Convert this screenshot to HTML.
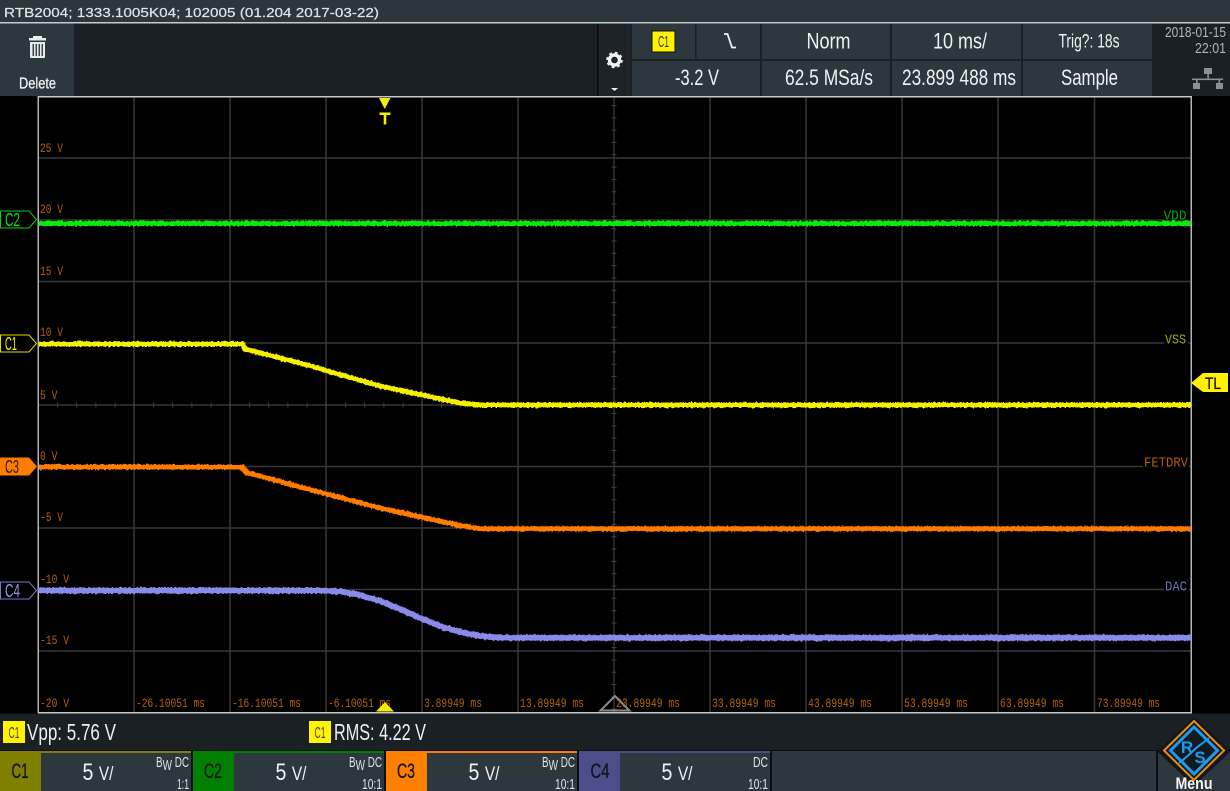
<!DOCTYPE html>
<html><head><meta charset="utf-8"><style>
html,body{margin:0;padding:0;background:#000;width:1230px;height:791px;overflow:hidden}
svg{display:block}
text{font-family:"Liberation Sans",sans-serif}
.m{font-family:"Liberation Mono",monospace;font-size:12.5px;fill:#b85f08}
.c{fill:#f0f2f2;font-size:22px;text-anchor:middle}
.s{fill:#dfe3e5;font-size:14.500px;text-anchor:end}
</style></head><body>
<svg width="1230" height="791" viewBox="0 0 1230 791" xmlns="http://www.w3.org/2000/svg">
<defs>
<filter id="n" x="-2%" y="-20%" width="104%" height="140%" filterUnits="objectBoundingBox">
<feTurbulence type="fractalNoise" baseFrequency="0.45 0.3" numOctaves="2" seed="4"/>
<feDisplacementMap in="SourceGraphic" scale="3.500" xChannelSelector="A" yChannelSelector="R"/>
</filter>
</defs>
<rect width="1230" height="791" fill="#000"/>
<!-- header -->
<rect width="1230" height="22" fill="#2d363c"/>
<rect y="22" width="1230" height="1.500" fill="#c8cccc"/>
<text x="4" y="17" font-size="13" fill="#e2e5e6" textLength="375" lengthAdjust="spacingAndGlyphs" stroke="#e2e5e6" stroke-width=".2">RTB2004; 1333.1005K04; 102005 (01.204 2017-03-22)</text>
<!-- toolbar -->
<rect y="23.500" width="1230" height="72.500" fill="#1a2024"/>
<rect y="23.500" width="74" height="72.500" fill="#2d373e"/>
<rect x="598" y="23.500" width="33" height="72.500" fill="#1d2327"/>
<rect x="597" y="23.500" width="1.500" height="72.500" fill="#0b0e10"/>
<g fill="#2d373e">
<rect x="632" y="24" width="63" height="35"/><rect x="696.500" y="24" width="63.500" height="35"/>
<rect x="762" y="24" width="128" height="35"/><rect x="892" y="24" width="129" height="35"/><rect x="1023" y="24" width="129" height="35"/>
<rect x="632" y="61" width="128" height="35"/><rect x="762" y="61" width="128" height="35"/><rect x="892" y="61" width="129" height="35"/><rect x="1023" y="61" width="129" height="35"/>
</g>
<!-- trash -->
<g fill="#e8ecec">
<rect x="33" y="36" width="9" height="2"/><rect x="29" y="38" width="17" height="2.500"/>
<path d="M30 42h15v15a1 1 0 0 1-1 1H31a1 1 0 0 1-1-1z"/>
</g>
<g fill="#3b444a"><rect x="32.500" y="44" width="1.500" height="12"/><rect x="35.500" y="44" width="1.500" height="12"/><rect x="38.500" y="44" width="1.500" height="12"/><rect x="41.500" y="44" width="1.500" height="12"/></g>
<text x="37.500" y="88.500" font-size="16" fill="#eef0f0" text-anchor="middle" textLength="37" lengthAdjust="spacingAndGlyphs" stroke="#eef0f0" stroke-width=".3">Delete</text>
<!-- gear -->
<circle cx="614.500" cy="60" r="5" fill="none" stroke="#f0f2f2" stroke-width="3.400"/>
<circle cx="614.500" cy="60" r="7" fill="none" stroke="#f0f2f2" stroke-width="2.600" stroke-dasharray="2.700 2.800"/>
<path d="M611 88h7l-3.500 3z" fill="#f0f2f2"/>
<!-- cells -->
<rect x="652" y="31" width="23" height="21" fill="#fff200" stroke="#111" stroke-width="1"/>
<text x="663.500" y="47" font-size="16" fill="#333" text-anchor="middle" textLength="11" lengthAdjust="spacingAndGlyphs">C1</text>
<path d="M724 34h3.500l4.500 13.500h4" fill="none" stroke="#f0f2f2" stroke-width="1.800"/>
<text class="c" x="828.500" y="48.500" textLength="44" lengthAdjust="spacingAndGlyphs">Norm</text>
<text class="c" x="960" y="48.500" textLength="54" lengthAdjust="spacingAndGlyphs">10 ms/</text>
<text class="c" x="1089" y="47.500" style="font-size:19px" textLength="61" lengthAdjust="spacingAndGlyphs">Trig?: 18s</text>
<text class="c" x="697" y="85" textLength="44" lengthAdjust="spacingAndGlyphs">-3.2 V</text>
<text class="c" x="829" y="85" textLength="88" lengthAdjust="spacingAndGlyphs">62.5 MSa/s</text>
<text class="c" x="959" y="85" textLength="114" lengthAdjust="spacingAndGlyphs">23.899 488 ms</text>
<text class="c" x="1089.500" y="85" textLength="57" lengthAdjust="spacingAndGlyphs">Sample</text>
<text x="1226" y="37" font-size="15" fill="#aeb4b8" text-anchor="end" textLength="61" lengthAdjust="spacingAndGlyphs">2018-01-15</text>
<text x="1226" y="53" font-size="15" fill="#aeb4b8" text-anchor="end" textLength="31" lengthAdjust="spacingAndGlyphs">22:01</text>
<g fill="#8b9094"><rect x="1204" y="68" width="8" height="6"/><rect x="1207.300" y="74" width="1.600" height="5"/><rect x="1192" y="78.500" width="31" height="1.600"/><rect x="1196" y="80" width="1.600" height="3"/><rect x="1218.500" y="80" width="1.600" height="3"/><rect x="1193" y="83" width="7" height="6"/><rect x="1216" y="83" width="7" height="6"/></g>
<!-- grid -->
<g stroke="#383838" stroke-width="1.500" fill="none">
<path d="M134 97V713M230 97V713M326 97V713M422 97V713M518 97V713M710 97V713M806 97V713M902 97V713M998 97V713M1094.500 97V713"/>
<path d="M38 158H1191M38 220H1191M38 281.500H1191M38 343H1191M38 466.500H1191M38 528H1191M38 589.500H1191M38 651H1191"/>
</g>
<g fill="none" stroke="#404040">
<path d="M38 405H1191M614 97V713" stroke-width="1.200"/>
<path d="M38 405H1191" stroke-width="5" stroke-dasharray="1 18.200" stroke-dashoffset="-19"/>
<path d="M614 97V713" stroke-width="5" stroke-dasharray="1 11.320" stroke-dashoffset="-8"/>
</g>
<rect x="37.500" y="96" width="1.500" height="617" fill="#b4b4b4"/>
<rect x="1190.500" y="96" width="1.500" height="617" fill="#b4b4b4"/>
<rect x="38" y="96" width="1154" height="1.500" fill="#c8c8c8"/>
<rect x="38" y="712" width="1154" height="1.500" fill="#c8c8c8"/>
<!-- scale labels -->
<text class="m" x="40" y="152" textLength="23" lengthAdjust="spacingAndGlyphs">25 V</text>
<text class="m" x="40" y="213" textLength="23" lengthAdjust="spacingAndGlyphs">20 V</text>
<text class="m" x="40" y="275" textLength="23" lengthAdjust="spacingAndGlyphs">15 V</text>
<text class="m" x="40" y="336" textLength="23" lengthAdjust="spacingAndGlyphs">10 V</text>
<text class="m" x="40" y="399" textLength="17.500" lengthAdjust="spacingAndGlyphs">5 V</text>
<text class="m" x="40" y="460" textLength="17.500" lengthAdjust="spacingAndGlyphs">0 V</text>
<text class="m" x="40" y="521" textLength="23" lengthAdjust="spacingAndGlyphs">-5 V</text>
<text class="m" x="40" y="583" textLength="29" lengthAdjust="spacingAndGlyphs">-10 V</text>
<text class="m" x="40" y="644" textLength="29" lengthAdjust="spacingAndGlyphs">-15 V</text>
<text class="m" x="40" y="707" textLength="29" lengthAdjust="spacingAndGlyphs">-20 V</text>
<text class="m" x="136" y="707" textLength="69" lengthAdjust="spacingAndGlyphs">-26.10051 ms</text>
<text class="m" x="232" y="707" textLength="69" lengthAdjust="spacingAndGlyphs">-16.10051 ms</text>
<text class="m" x="328" y="707" textLength="63" lengthAdjust="spacingAndGlyphs">-6.10051 ms</text>
<text class="m" x="424" y="707" textLength="58" lengthAdjust="spacingAndGlyphs">3.89949 ms</text>
<text class="m" x="520" y="707" textLength="64" lengthAdjust="spacingAndGlyphs">13.89949 ms</text>
<text class="m" x="616" y="707" textLength="64" lengthAdjust="spacingAndGlyphs">23.89949 ms</text>
<text class="m" x="712" y="707" textLength="64" lengthAdjust="spacingAndGlyphs">33.89949 ms</text>
<text class="m" x="808" y="707" textLength="64" lengthAdjust="spacingAndGlyphs">43.89949 ms</text>
<text class="m" x="904" y="707" textLength="64" lengthAdjust="spacingAndGlyphs">53.89949 ms</text>
<text class="m" x="1000" y="707" textLength="64" lengthAdjust="spacingAndGlyphs">63.89949 ms</text>
<text class="m" x="1097" y="707" textLength="63" lengthAdjust="spacingAndGlyphs">73.89949 ms</text>
<!-- trace names -->
<rect x="1163" y="208" width="27" height="12" fill="#000"/>
<text x="1163.500" y="219.500" style="font-family:'Liberation Mono',monospace" font-size="14" fill="#00a800" textLength="23" lengthAdjust="spacingAndGlyphs">VDD</text>
<rect x="1164" y="332" width="24" height="12" fill="#000"/>
<text x="1165" y="343.500" style="font-family:'Liberation Mono',monospace" font-size="14" fill="#a8a800" textLength="21" lengthAdjust="spacingAndGlyphs">VSS</text>
<rect x="1143" y="455" width="46" height="12" fill="#000"/>
<text x="1144" y="466.500" style="font-family:'Liberation Mono',monospace" font-size="14" fill="#b85f08" textLength="44" lengthAdjust="spacingAndGlyphs">FETDRV</text>
<rect x="1164" y="579" width="25" height="12" fill="#000"/>
<text x="1165" y="590.500" style="font-family:'Liberation Mono',monospace" font-size="14" fill="#6f6fb8" textLength="22" lengthAdjust="spacingAndGlyphs">DAC</text>
<!-- traces: solid core plus noisy edge -->
<g fill="none" stroke-linejoin="round">
<path d="M39 223.500H1191" stroke="#10e810" stroke-width="4"/>
<path d="M39 344H243L245 349L300 363L380 386L460 403L480 405H1191" stroke="#f5f000" stroke-width="4"/>
<path d="M39 467H243L245 472L300 487L380 508L460 525.500L480 528.800H1191" stroke="#ff7c00" stroke-width="4"/>
<path d="M39 590.500H320L340 591.500L360 595L380 601L400 609L420 618L440 626L460 632L480 636L500 637.800H1191" stroke="#8a8aea" stroke-width="5"/>
</g>
<g fill="none" stroke-linejoin="round" filter="url(#n)">
<path d="M39 223.500H1191" stroke="#10e810" stroke-width="5"/>
<path d="M39 344H243L245 349L300 363L380 386L460 403L480 405H1191" stroke="#f5f000" stroke-width="5"/>
<path d="M39 467H243L245 472L300 487L380 508L460 525.500L480 528.800H1191" stroke="#ff7c00" stroke-width="5"/>
<path d="M39 590.500H320L340 591.500L360 595L380 601L400 609L420 618L440 626L460 632L480 636L500 637.800H1191" stroke="#8a8aea" stroke-width="6"/>
</g>
<!-- channel tags -->
<path d="M.5 211H29L36.500 219.500L29 228H.5z" fill="#000" stroke="#0bd00b"/>
<text x="5" y="226" font-size="18" fill="#0be30b" textLength="15" lengthAdjust="spacingAndGlyphs">C2</text>
<path d="M.5 335H29L36.500 343.500L29 352H.5z" fill="#000" stroke="#e0dc00"/>
<text x="5" y="350" font-size="18" fill="#f5f000" textLength="12" lengthAdjust="spacingAndGlyphs">C1</text>
<path d="M0 457.500H29L37 466.500L29 475.500H0z" fill="#ff7c00"/>
<text x="5" y="473" font-size="18" fill="#2a1500" textLength="14" lengthAdjust="spacingAndGlyphs">C3</text>
<path d="M.5 582H29L36.500 590.500L29 599H.5z" fill="#000" stroke="#7a7ad0"/>
<text x="5" y="597" font-size="18" fill="#9a9af0" textLength="15" lengthAdjust="spacingAndGlyphs">C4</text>
<path d="M1191 383L1203 373H1228V392H1203z" fill="#fff200"/>
<text x="1205" y="389" font-size="17" fill="#111" textLength="16" lengthAdjust="spacingAndGlyphs" stroke="#111" stroke-width=".3">TL</text>
<!-- trigger markers -->
<path d="M379 98H390.500L384.700 109z" fill="#f5f000"/>
<path d="M379.500 112.500H390.500V115H386.300V124.500H383.700V115H379.500z" fill="#f5f000"/>
<path d="M376 711.500L385 702L394 711.500z" fill="#f5f000"/>
<path d="M600.500 710.500L615 696L629.500 710.500z" fill="none" stroke="#8a8a8a" stroke-width="2"/>
<!-- measurement bar -->
<rect y="713.500" width="1230" height="37" fill="#1a2024"/>
<rect x="3" y="721" width="22" height="22" fill="#fff200"/>
<text x="14" y="738" font-size="16" fill="#444" text-anchor="middle" textLength="11" lengthAdjust="spacingAndGlyphs">C1</text>
<text x="27" y="740" font-size="23" fill="#eef0f0" textLength="89" lengthAdjust="spacingAndGlyphs">Vpp: 5.76 V</text>
<rect x="309" y="721" width="22" height="22" fill="#fff200"/>
<text x="320" y="738" font-size="16" fill="#444" text-anchor="middle" textLength="11" lengthAdjust="spacingAndGlyphs">C1</text>
<text x="334" y="740" font-size="23" fill="#eef0f0" textLength="92" lengthAdjust="spacingAndGlyphs">RMS: 4.22 V</text>
<!-- channels -->
<rect y="750" width="1230" height="41" fill="#0d1012"/>
<g fill="#2d373e">
<rect x="41" y="753" width="150" height="38"/><rect x="234" y="753" width="150" height="38"/><rect x="427" y="753" width="150" height="38"/><rect x="620" y="753" width="150" height="38"/>
<rect x="772" y="751" width="384" height="40"/><rect x="1158" y="751" width="72" height="40"/>
</g>
<rect x="0" y="751" width="191" height="2" fill="#7f7f00"/><rect x="0" y="751" width="41" height="40" fill="#7f7f00"/>
<rect x="193" y="751" width="191" height="2" fill="#007f00"/><rect x="193" y="751" width="41" height="40" fill="#007f00"/>
<rect x="386" y="751" width="191" height="2" fill="#ff8000"/><rect x="386" y="751" width="41" height="40" fill="#ff8000"/>
<rect x="579" y="751" width="191" height="2" fill="#4d4d8c"/><rect x="579" y="751" width="41" height="40" fill="#4d4d8c"/>
<g font-size="21" fill="#12151a" text-anchor="middle" stroke="#12151a" stroke-width=".3">
<text x="20" y="778" textLength="17" lengthAdjust="spacingAndGlyphs">C1</text>
<text x="213" y="778" textLength="18" lengthAdjust="spacingAndGlyphs">C2</text>
<text x="406" y="778" textLength="18" lengthAdjust="spacingAndGlyphs">C3</text>
<text x="600" y="778" textLength="19" lengthAdjust="spacingAndGlyphs">C4</text>
</g>
<text class="c" x="98" y="780" style="font-size:24px" textLength="31" lengthAdjust="spacingAndGlyphs">5 <tspan font-size="19">V/</tspan></text>
<text class="c" x="291" y="780" style="font-size:24px" textLength="31" lengthAdjust="spacingAndGlyphs">5 <tspan font-size="19">V/</tspan></text>
<text class="c" x="484" y="780" style="font-size:24px" textLength="31" lengthAdjust="spacingAndGlyphs">5 <tspan font-size="19">V/</tspan></text>
<text class="c" x="677" y="780" style="font-size:24px" textLength="31" lengthAdjust="spacingAndGlyphs">5 <tspan font-size="19">V/</tspan></text>
<text class="s" x="189" y="767" textLength="33" lengthAdjust="spacingAndGlyphs">B<tspan dy="3">W</tspan><tspan dy="-3"> DC</tspan></text>
<text class="s" x="382" y="767" textLength="33" lengthAdjust="spacingAndGlyphs">B<tspan dy="3">W</tspan><tspan dy="-3"> DC</tspan></text>
<text class="s" x="575" y="767" textLength="33" lengthAdjust="spacingAndGlyphs">B<tspan dy="3">W</tspan><tspan dy="-3"> DC</tspan></text>
<text class="s" x="768" y="767" textLength="15" lengthAdjust="spacingAndGlyphs">DC</text>
<text class="s" x="189" y="789" textLength="12" lengthAdjust="spacingAndGlyphs">1:1</text>
<text class="s" x="382" y="789" textLength="20" lengthAdjust="spacingAndGlyphs">10:1</text>
<text class="s" x="575" y="789" textLength="20" lengthAdjust="spacingAndGlyphs">10:1</text>
<text class="s" x="768" y="789" textLength="20" lengthAdjust="spacingAndGlyphs">10:1</text>
<!-- logo -->
<path d="M1194 717L1230 750.500V752L1194 786L1158 752V750.500z" fill="#11161a"/>
<path d="M1194 721L1224 750.500L1194 780L1164 750.500z" fill="#131a20" stroke="#f08a14" stroke-width="2"/>
<path d="M1194 727L1217.500 750.500L1194 774L1170.500 750.500z" fill="#131a20" stroke="#1e9bee" stroke-width="3"/>
<path d="M1179 763C1188 756 1190 754 1194 750C1198 746 1202 744 1209 738" fill="none" stroke="#1e9bee" stroke-width="2"/>
<text x="1187" y="753" font-size="17" font-weight="bold" fill="#1e9bee" text-anchor="middle">R</text>
<text x="1200" y="763" font-size="17" font-weight="bold" fill="#1e9bee" text-anchor="middle">S</text>
<text x="1194" y="789" font-size="17" font-weight="bold" fill="#f4f6f6" text-anchor="middle" textLength="37" lengthAdjust="spacingAndGlyphs">Menu</text>
</svg>
</body></html>
